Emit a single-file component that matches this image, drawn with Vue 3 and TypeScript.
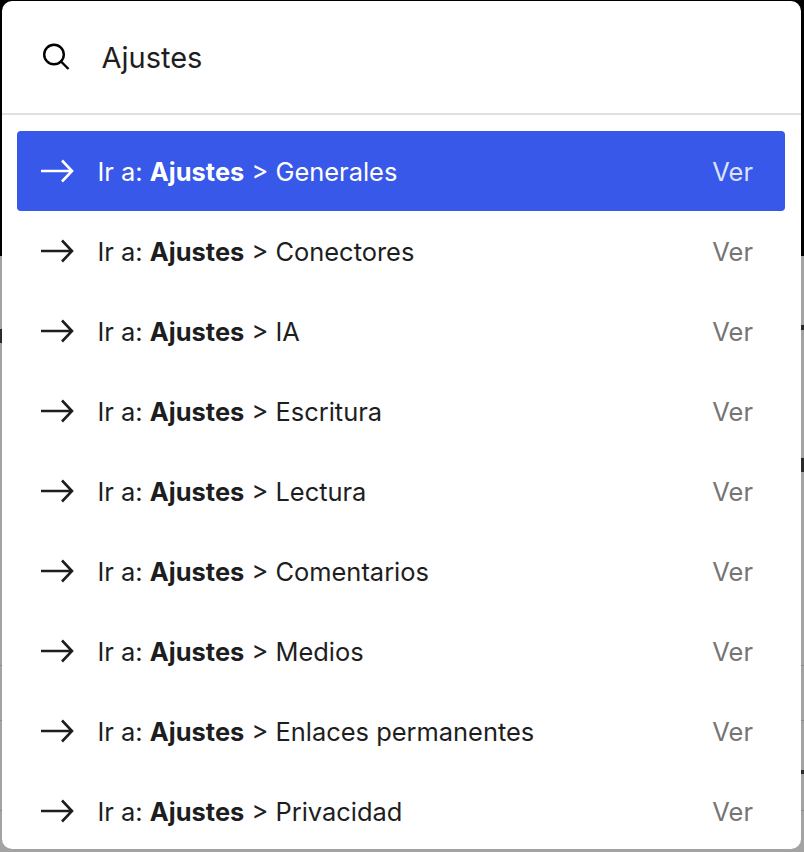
<script setup lang="ts">
const items: string[] = ['Generales', 'Conectores', 'IA', 'Escritura', 'Lectura', 'Comentarios', 'Medios', 'Enlaces permanentes', 'Privacidad']
</script>

<template>
  <div class="page">
    <div class="backdrop">
      <div class="dark"></div>
      <div class="grey"></div>
      <i class="mark m1"></i><i class="mark m2"></i><i class="mark m3"></i><i class="mark m4"></i>
      <i class="line l1"></i><i class="line l2"></i><i class="line l3"></i>
    </div>
    <div class="panel">
      <div class="search">
        <svg class="search-icon" viewBox="0 0 30 30" width="30" height="30" fill="none" stroke="currentColor" stroke-width="2.4">
          <circle cx="13" cy="12.5" r="9.8" />
          <path d="M20 19.5 L27.5 27" />
        </svg>
        <span class="query">Ajustes</span>
      </div>
      <ul class="list">
        <li v-for="(item, i) in items" :key="item" class="row" :class="{ active: i === 0 }">
          <svg class="arrow" viewBox="0 0 34 24" width="34" height="24" fill="none" stroke="currentColor" stroke-width="2.6">
            <path d="M0 12 H31 M21 1.5 L31 12 L21 22.5" />
          </svg>
          <span class="label">Ir a: <b>Ajustes</b> &gt; {{ item }}</span>
          <span class="ver">Ver</span>
        </li>
      </ul>
    </div>
  </div>
</template>

<style>
html, body { margin: 0; padding: 0; background: #a3a3a3; }
</style>

<style scoped>
.page { position: relative; width: 804px; height: 852px; overflow: hidden; font-family: Inter, "Liberation Sans", sans-serif; color: #1e1e1e; }
.backdrop { position: absolute; inset: 0; display: flex; flex-direction: column; }
.dark { height: 256px; background: #000; }
.grey { flex: 1; background: #a3a3a3; }
.mark { position: absolute; background: #2a2a2a; }
.m1 { left: 801px; top: 325px; width: 3px; height: 5px; }
.m2 { left: 801px; top: 458px; width: 3px; height: 14px; }
.m3 { left: 801px; top: 770px; width: 3px; height: 4px; }
.m4 { left: 0; top: 329px; width: 2px; height: 14px; }
.line { position: absolute; left: 0; right: 0; height: 1px; background: #8a8a8a; }
.l1 { top: 665px; }
.l2 { top: 720px; }
.l3 { top: 810px; }
.panel { position: relative; margin: 1px 0 0 2px; width: 799px; height: 848px; background: #fff; border-radius: 10px; overflow: hidden; }
.search { height: 114px; box-sizing: border-box; border-bottom: 2px solid #e0e0e0; display: flex; align-items: center; padding-left: 39px; gap: 30.5px; }
.search-icon { color: #000; flex: none; }
.query { font-size: 29px; line-height: 1; }
.list { list-style: none; margin: 0; padding: 16px 16px 0 15px; display: flex; flex-direction: column; }
.row { height: 80px; flex: none; display: flex; align-items: center; padding: 0 32px 0 24px; border-radius: 4px; font-size: 25.45px; }
.arrow { flex: none; margin-right: 22.5px; }
.label { flex: 1; white-space: pre; }
.label b { font-weight: 700; }
.ver { color: #757575; }
.active { background: #3858e9; color: #fff; }
.active .ver { color: #dbe3ff; }
</style>
